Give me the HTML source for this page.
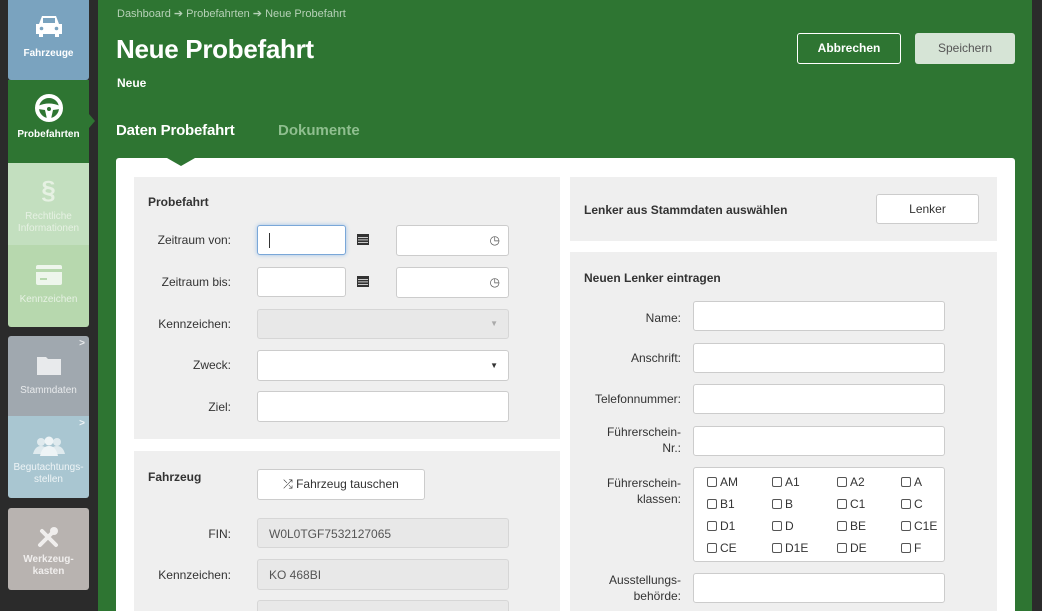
<!DOCTYPE html>
<html><head><meta charset="utf-8"><style>
*{box-sizing:border-box;margin:0;padding:0}
html,body{width:1042px;height:611px;overflow:hidden}
body{font-family:"Liberation Sans",sans-serif}
#w{position:relative;width:1042px;height:611px;overflow:hidden;background:#2e7532}
.side{position:absolute;left:0;top:0;width:98px;height:611px;background:#2b2b2b}
.rs{position:absolute;left:1032px;top:0;width:10px;height:611px;background:#2b2b2b}
.tile{position:absolute;left:8px;width:81px;color:#fff;font-size:10px;font-weight:bold;text-align:center;line-height:12px}
.tile svg{display:block;margin:0 auto}
.a{position:absolute;font-size:11px;color:#333}
.lbl{position:absolute;font-size:12px;color:#333;text-align:right}
.in{position:absolute;background:#fff;border:1px solid #ccc;border-radius:3px}
.dis{background:#e8e8e8;border-color:#d6d6d6}
.panel{position:absolute;background:#efefef}
.h{position:absolute;font-size:12px;font-weight:bold;color:#333}
.cb{position:absolute;font-size:12px;color:#333}
.cb i{display:inline-block;width:10px;height:10px;border:1px solid #555;border-radius:2px;margin-right:3px;vertical-align:-1px}
</style></head><body><div id="w">
<div class="side"></div><div class="rs"></div>
<div class="tile" style="top:0;height:80px;background:#7aa3bf;border-radius:0 0 3px 3px">
<svg width="30" height="26" viewBox="0 0 30 26" style="margin-top:13px"><path d="M5 11l3-8h14l3 8h3v10h-3v3h-4v-3H9v3H5v-3H2V11z" fill="#fff"/><rect x="9" y="5" width="12" height="5" fill="#7aa3bf"/><circle cx="7.5" cy="15.5" r="1.8" fill="#7aa3bf"/><circle cx="22.5" cy="15.5" r="1.8" fill="#7aa3bf"/></svg>
<div style="margin-top:9px">Fahrzeuge</div></div>
<div class="tile" style="top:80px;height:83px;background:#2e7532">
<svg width="30" height="30" viewBox="0 0 30 30" style="margin-top:13px"><circle cx="15" cy="15" r="12" fill="none" stroke="#fff" stroke-width="4"/><path d="M4 13q11-5 22 0v3l-7 1-2 9h-4l-2-9-7-1z" fill="#fff"/><circle cx="15" cy="16" r="2" fill="#2e7532"/></svg>
<div style="margin-top:6px">Probefahrten</div></div>
<div style="position:absolute;left:83px;top:114px;width:0;height:0;border-top:7px solid transparent;border-bottom:7px solid transparent;border-right:6px solid #2b2b2b;display:none"></div>
<div style="position:absolute;left:89px;top:114px;width:0;height:0;border-top:7px solid transparent;border-bottom:7px solid transparent;border-left:6px solid #2e7532"></div>
<div class="tile" style="top:163px;height:82px;background:#c3dfbf;color:#e6f1e3;font-weight:normal">
<div style="font-size:26px;font-weight:bold;margin-top:14px;line-height:26px">§</div>
<div style="margin-top:8px">Rechtliche<br>Informationen</div></div>
<div class="tile" style="top:245px;height:82px;background:#b7d8ae;color:#e6f1e3;border-radius:0 0 3px 3px;font-weight:normal">
<svg width="26" height="20" viewBox="0 0 26 20" style="margin-top:20px"><rect x="0" y="0" width="26" height="20" rx="2" fill="#eef6ec"/><rect x="0" y="4" width="26" height="3" fill="#b7d8ae"/><rect x="4" y="13" width="7" height="2" fill="#b7d8ae"/></svg>
<div style="margin-top:9px">Kennzeichen</div></div>
<div class="tile" style="top:336px;height:80px;background:#a0a8af;color:#e8eaec;border-radius:3px 3px 0 0;font-weight:normal">
<div style="position:absolute;right:4px;top:2px;font-weight:bold">&gt;</div>
<svg width="24" height="20" viewBox="0 0 24 20" style="margin-top:19px"><path d="M0 2h9l2 2h13v16H0z" fill="#e8eaec"/></svg>
<div style="margin-top:10px">Stammdaten</div></div>
<div class="tile" style="top:416px;height:82px;background:#a9c6d1;color:#eef4f6;border-radius:0 0 3px 3px;font-weight:normal">
<div style="position:absolute;right:4px;top:2px;font-weight:bold">&gt;</div>
<svg width="34" height="20" viewBox="0 0 34 20" style="margin-top:20px"><circle cx="9" cy="6" r="4" fill="#dfeaee"/><circle cx="25" cy="6" r="4" fill="#dfeaee"/><path d="M1 18q2-8 8-8 6 0 8 8zM17 18q2-8 8-8 6 0 8 8z" fill="#dfeaee"/><circle cx="17" cy="5" r="4.5" fill="#eef4f6"/><path d="M8 20q2-10 9-10 7 0 9 10z" fill="#eef4f6"/></svg>
<div style="margin-top:6px">Begutachtungs-<br>stellen</div></div>
<div class="tile" style="top:508px;height:82px;background:#b8b3b0;color:#f0eeed;border-radius:3px">
<svg width="24" height="24" viewBox="0 0 24 24" style="margin-top:18px"><path d="M3 19L15 7M5 5l14 14" stroke="#f0eeed" stroke-width="4" stroke-linecap="round"/><circle cx="17" cy="5" r="4" fill="#f0eeed"/></svg>
<div style="margin-top:4px">Werkzeug-<br>kasten</div></div>

<div style="position:absolute;left:117px;top:7px;font-size:11px;color:#b6d1b7">Dashboard ➔ Probefahrten ➔ Neue Probefahrt</div>
<div style="position:absolute;left:116px;top:34px;font-size:26px;color:#fff;font-weight:bold;letter-spacing:-0.3px">Neue Probefahrt</div>
<div style="position:absolute;left:117px;top:76px;font-size:12px;color:#fff;font-weight:bold">Neue</div>
<div style="position:absolute;left:797px;top:33px;width:104px;height:31px;border:1px solid #fff;border-radius:3px;color:#fff;font-size:12px;font-weight:bold;text-align:center;line-height:29px">Abbrechen</div>
<div style="position:absolute;left:915px;top:33px;width:100px;height:31px;background:#d6e4d6;border-radius:3px;color:#555;font-size:12px;text-align:center;line-height:31px">Speichern</div>
<div style="position:absolute;left:116px;top:122px;font-size:15px;color:#fff;font-weight:bold;letter-spacing:-0.2px">Daten Probefahrt</div>
<div style="position:absolute;left:278px;top:122px;font-size:15px;color:#8fbf8f;font-weight:bold">Dokumente</div>

<div style="position:absolute;left:116px;top:158px;width:899px;height:460px;background:#fff;border-radius:3px"></div>
<div style="position:absolute;left:167px;top:158px;width:0;height:0;border-left:14px solid transparent;border-right:14px solid transparent;border-top:8px solid #2e7532"></div>

<div class="panel" style="left:134px;top:177px;width:426px;height:262px"></div>
<div class="h" style="left:148px;top:195px">Probefahrt</div>
<div class="lbl" style="left:134px;width:97px;top:233px">Zeitraum von:</div>
<div class="in" style="left:257px;top:225px;width:89px;height:30px;border-color:#7aa7d8;box-shadow:0 0 4px #9cc0e8"><div style="position:absolute;left:11px;top:7px;width:1px;height:15px;background:#333"></div></div>
<svg class="a" style="left:357px;top:233px" width="12" height="12" viewBox="0 0 12 12"><rect x="0" y="1" width="12" height="11" fill="#333"/><g fill="#efefef"><rect x="1" y="4" width="10" height="0.8"/><rect x="1" y="6.5" width="10" height="0.8"/><rect x="1" y="9" width="10" height="0.8"/></g></svg>
<div class="in" style="left:396px;top:225px;width:113px;height:31px"><div class="a" style="right:8px;top:7px;font-size:12px;color:#555">◷</div></div>
<div class="lbl" style="left:134px;width:97px;top:275px">Zeitraum bis:</div>
<div class="in" style="left:257px;top:267px;width:89px;height:30px"></div>
<svg class="a" style="left:357px;top:275px" width="12" height="12" viewBox="0 0 12 12"><rect x="0" y="1" width="12" height="11" fill="#333"/><g fill="#efefef"><rect x="1" y="4" width="10" height="0.8"/><rect x="1" y="6.5" width="10" height="0.8"/><rect x="1" y="9" width="10" height="0.8"/></g></svg>
<div class="in" style="left:396px;top:267px;width:113px;height:31px"><div class="a" style="right:8px;top:7px;font-size:12px;color:#555">◷</div></div>
<div class="lbl" style="left:134px;width:97px;top:317px">Kennzeichen:</div>
<div class="in dis" style="left:257px;top:309px;width:252px;height:30px"><div class="a" style="right:10px;top:9px;font-size:8px;color:#aaa">▼</div></div>
<div class="lbl" style="left:134px;width:97px;top:358px">Zweck:</div>
<div class="in" style="left:257px;top:350px;width:252px;height:31px"><div class="a" style="right:10px;top:10px;font-size:8px;color:#333">▼</div></div>
<div class="lbl" style="left:134px;width:97px;top:400px">Ziel:</div>
<div class="in" style="left:257px;top:391px;width:252px;height:31px"></div>

<div class="panel" style="left:134px;top:451px;width:426px;height:170px"></div>
<div class="h" style="left:148px;top:470px">Fahrzeug</div>
<div class="in" style="left:257px;top:469px;width:168px;height:31px;font-size:12px;color:#333;text-align:center;line-height:29px">⤮ Fahrzeug tauschen</div>
<div class="lbl" style="left:134px;width:97px;top:527px">FIN:</div>
<div class="in dis" style="left:257px;top:518px;width:252px;height:30px;font-size:12px;color:#555;padding:8px 11px">W0L0TGF7532127065</div>
<div class="lbl" style="left:134px;width:97px;top:568px">Kennzeichen:</div>
<div class="in dis" style="left:257px;top:559px;width:252px;height:31px;font-size:12px;color:#555;padding:8px 11px">KO 468BI</div>
<div class="in dis" style="left:257px;top:600px;width:252px;height:31px"></div>

<div class="panel" style="left:570px;top:177px;width:427px;height:64px"></div>
<div class="h" style="left:584px;top:203px">Lenker aus Stammdaten auswählen</div>
<div class="in" style="left:876px;top:194px;width:103px;height:30px;font-size:12px;color:#333;text-align:center;line-height:28px">Lenker</div>
<div class="panel" style="left:570px;top:252px;width:427px;height:370px"></div>
<div class="h" style="left:584px;top:271px">Neuen Lenker eintragen</div>
<div class="lbl" style="left:570px;width:111px;top:311px">Name:</div>
<div class="in" style="left:693px;top:301px;width:252px;height:30px"></div>
<div class="lbl" style="left:570px;width:111px;top:351px">Anschrift:</div>
<div class="in" style="left:693px;top:343px;width:252px;height:30px"></div>
<div class="lbl" style="left:570px;width:111px;top:392px">Telefonnummer:</div>
<div class="in" style="left:693px;top:384px;width:252px;height:30px"></div>
<div class="lbl" style="left:570px;width:111px;top:424px;line-height:16px">Führerschein-<br>Nr.:</div>
<div class="in" style="left:693px;top:426px;width:252px;height:30px"></div>
<div class="lbl" style="left:570px;width:111px;top:475px;line-height:16px">Führerschein-<br>klassen:</div>
<div class="in" style="left:693px;top:467px;width:252px;height:95px"></div>
<div class="cb" style="left:707px;top:475px"><i></i>AM</div><div class="cb" style="left:772px;top:475px"><i></i>A1</div><div class="cb" style="left:837px;top:475px"><i></i>A2</div><div class="cb" style="left:901px;top:475px"><i></i>A</div>
<div class="cb" style="left:707px;top:497px"><i></i>B1</div><div class="cb" style="left:772px;top:497px"><i></i>B</div><div class="cb" style="left:837px;top:497px"><i></i>C1</div><div class="cb" style="left:901px;top:497px"><i></i>C</div>
<div class="cb" style="left:707px;top:519px"><i></i>D1</div><div class="cb" style="left:772px;top:519px"><i></i>D</div><div class="cb" style="left:837px;top:519px"><i></i>BE</div><div class="cb" style="left:901px;top:519px"><i></i>C1E</div>
<div class="cb" style="left:707px;top:541px"><i></i>CE</div><div class="cb" style="left:772px;top:541px"><i></i>D1E</div><div class="cb" style="left:837px;top:541px"><i></i>DE</div><div class="cb" style="left:901px;top:541px"><i></i>F</div>
<div class="lbl" style="left:570px;width:111px;top:572px;line-height:16px">Ausstellungs-<br>behörde:</div>
<div class="in" style="left:693px;top:573px;width:252px;height:30px"></div>
</div></body></html>
